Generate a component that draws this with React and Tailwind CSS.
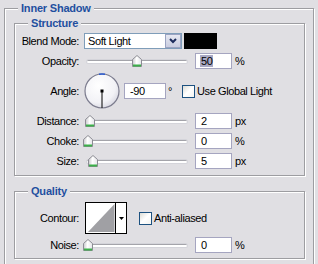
import React from "react";

const font = { fontFamily: '"Liberation Sans", Arial, sans-serif' };

function GroupTitle({ children }) {
  return (
    <div className="flex h-[13px] -mt-[7px]">
      <span className="ml-[13px] px-[3px] bg-[#e0dfe3] font-bold text-[#1f4f9f] leading-[13px] tracking-[-0.2px]">
        {children}
      </span>
    </div>
  );
}

function Label({ children }) {
  return <div className="w-[64px] shrink-0 text-right">{children}</div>;
}

function Thumb() {
  return (
    <svg width="10" height="12" viewBox="0 0 10 12">
      <defs>
        <linearGradient id="tg" x1="0" y1="0" x2="1" y2="0">
          <stop offset="0" stopColor="#c8c8cc" />
          <stop offset="0.45" stopColor="#ffffff" />
          <stop offset="1" stopColor="#e4e4e8" />
        </linearGradient>
      </defs>
      <path d="M0.5 4.5 L5 0.5 L9.5 4.5 L9.5 11.5 L0.5 11.5 Z" fill="url(#tg)" stroke="#8c8c94" />
      <path d="M1 10.5 H9" stroke="#3cb04a" strokeWidth="2" />
    </svg>
  );
}

function Slider({ pos }) {
  return (
    <div className="relative w-[106px] h-[16px] ml-[5px] shrink-0">
      <div className="absolute left-[3px] right-[3px] top-[7px] h-[3px] bg-white border-t border-[#a4a4aa] rounded-full shadow-[0_0_0_1px_#d4d4da]" />
      <div className="absolute top-[2px]" style={{ left: pos - 5 }}>
        <Thumb />
      </div>
    </div>
  );
}

function Field({ value, w = "w-[37px]", selected }) {
  return (
    <div className={`${w} h-[16px] border border-[#a5a5c0] bg-white flex items-center pl-[4px] shrink-0`}>
      {selected ? (
        <span className="bg-[#a9a9c4] px-[1px] leading-[12px]">{value}</span>
      ) : (
        <span className="pl-[1px] leading-[12px]">{value}</span>
      )}
    </div>
  );
}

function Checkbox() {
  return (
    <div className="w-[13px] h-[13px] border border-[#1c5180] bg-gradient-to-br from-[#dcdcd6] via-white to-[#f4f4f0] shrink-0" />
  );
}

function SliderRow({ label, pos, value, unit, selected }) {
  return (
    <div className="flex items-center h-[16px] mt-[4px]">
      <Label>{label}</Label>
      <Slider pos={pos} />
      <div className="ml-[5px]">
        <Field value={value} selected={selected} />
      </div>
      <span className="ml-[3px]">{unit}</span>
    </div>
  );
}

function Dial() {
  return (
    <svg width="36" height="36" viewBox="0 0 36 36" className="shrink-0">
      <defs>
        <radialGradient id="dg" cx="0.4" cy="0.35" r="0.7">
          <stop offset="0" stopColor="#ffffff" />
          <stop offset="0.7" stopColor="#f2f2f6" />
          <stop offset="1" stopColor="#d6d6e0" />
        </radialGradient>
      </defs>
      <circle cx="18" cy="18" r="17" fill="url(#dg)" stroke="#7c7c8e" strokeWidth="1.2" />
      <path d="M15 1.3 A17 17 0 0 1 21 1.3" stroke="#2a5ad0" strokeWidth="1.4" fill="none" />
      <line x1="18" y1="18" x2="18" y2="35" stroke="#000" strokeWidth="1" />
      <rect x="16.5" y="16.5" width="3" height="3" fill="#000" />
    </svg>
  );
}

function Contour() {
  return (
    <div className="ml-[6px] w-[42px] h-[32px] border border-black bg-white flex shrink-0">
      <div className="w-[29px] h-full">
        <svg width="29" height="30" viewBox="0 0 29 30">
          <polygon points="2,29 28.5,1 28.5,29" fill="#a0a0a4" />
        </svg>
      </div>
      <div className="w-[11px] h-full border-l border-black flex items-center justify-center">
        <svg width="5" height="3" viewBox="0 0 5 3">
          <polygon points="0,0 5,0 2.5,3" fill="#000" />
        </svg>
      </div>
    </div>
  );
}

export default function App() {
  return (
    <div
      className="w-[318px] h-[264px] overflow-hidden bg-[#e0dfe3] pt-[8px] pl-[4px] text-[11px] text-black tracking-[-0.4px]"
      style={font}
    >
      <div className="w-[310px] h-[280px] border border-[#9d9da1] shadow-[inset_1px_1px_0_#fff,1px_1px_0_#fff]">
        <GroupTitle>Inner Shadow</GroupTitle>

        <div className="ml-[9px] mt-[8px] w-[291px] border border-[#9d9da1] shadow-[inset_1px_1px_0_#fff,1px_1px_0_#fff] pb-[6px]">
          <GroupTitle>Structure</GroupTitle>

          <div className="flex items-center h-[16px] mt-[3px]">
            <Label>Blend Mode:</Label>
            <div className="ml-[5px] w-[98px] h-[16px] border border-[#7f9db9] bg-white flex shrink-0">
              <div className="flex-1 pl-[3px] leading-[14px]">Soft Light</div>
              <div className="w-[16px] h-[14px] bg-gradient-to-b from-[#e6e8f2] to-[#c9cde0] border border-[#9aa3c2] flex items-center justify-center">
                <svg width="8" height="6" viewBox="0 0 8 6">
                  <path d="M1 1 L4 4 L7 1" stroke="#1c2c5c" strokeWidth="2" fill="none" />
                </svg>
              </div>
            </div>
            <div className="ml-[2px] w-[33px] h-[16px] bg-black shrink-0" />
          </div>

          <SliderRow label="Opacity:" pos={53} value="50" unit="%" selected />

          <div className="flex items-center h-[36px] mt-[4px]">
            <Label>Angle:</Label>
            <div className="ml-[5px]">
              <Dial />
            </div>
            <div className="ml-[4px]">
              <Field value="-90" w="w-[42px]" />
            </div>
            <span className="ml-[2px] w-[14px] self-start mt-[10px]">°</span>
            <Checkbox />
            <span className="ml-[2px]">Use Global Light</span>
          </div>

          <SliderRow label="Distance:" pos={6} value="2" unit="px" />
          <SliderRow label="Choke:" pos={3.5} value="0" unit="%" />
          <SliderRow label="Size:" pos={8.5} value="5" unit="px" />
        </div>

        <div className="ml-[9px] mt-[15px] w-[291px] border border-[#9d9da1] shadow-[inset_1px_1px_0_#fff,1px_1px_0_#fff] pb-[5px]">
          <GroupTitle>Quality</GroupTitle>

          <div className="flex items-center h-[32px] mt-[4px]">
            <Label>Contour:</Label>
            <Contour />
            <div className="ml-[12px] flex items-center">
              <Checkbox />
              <span className="ml-[2px]">Anti-aliased</span>
            </div>
          </div>

          <div className="-mt-[1px]">
            <SliderRow label="Noise:" pos={3.5} value="0" unit="%" />
          </div>
        </div>
      </div>
    </div>
  );
}
